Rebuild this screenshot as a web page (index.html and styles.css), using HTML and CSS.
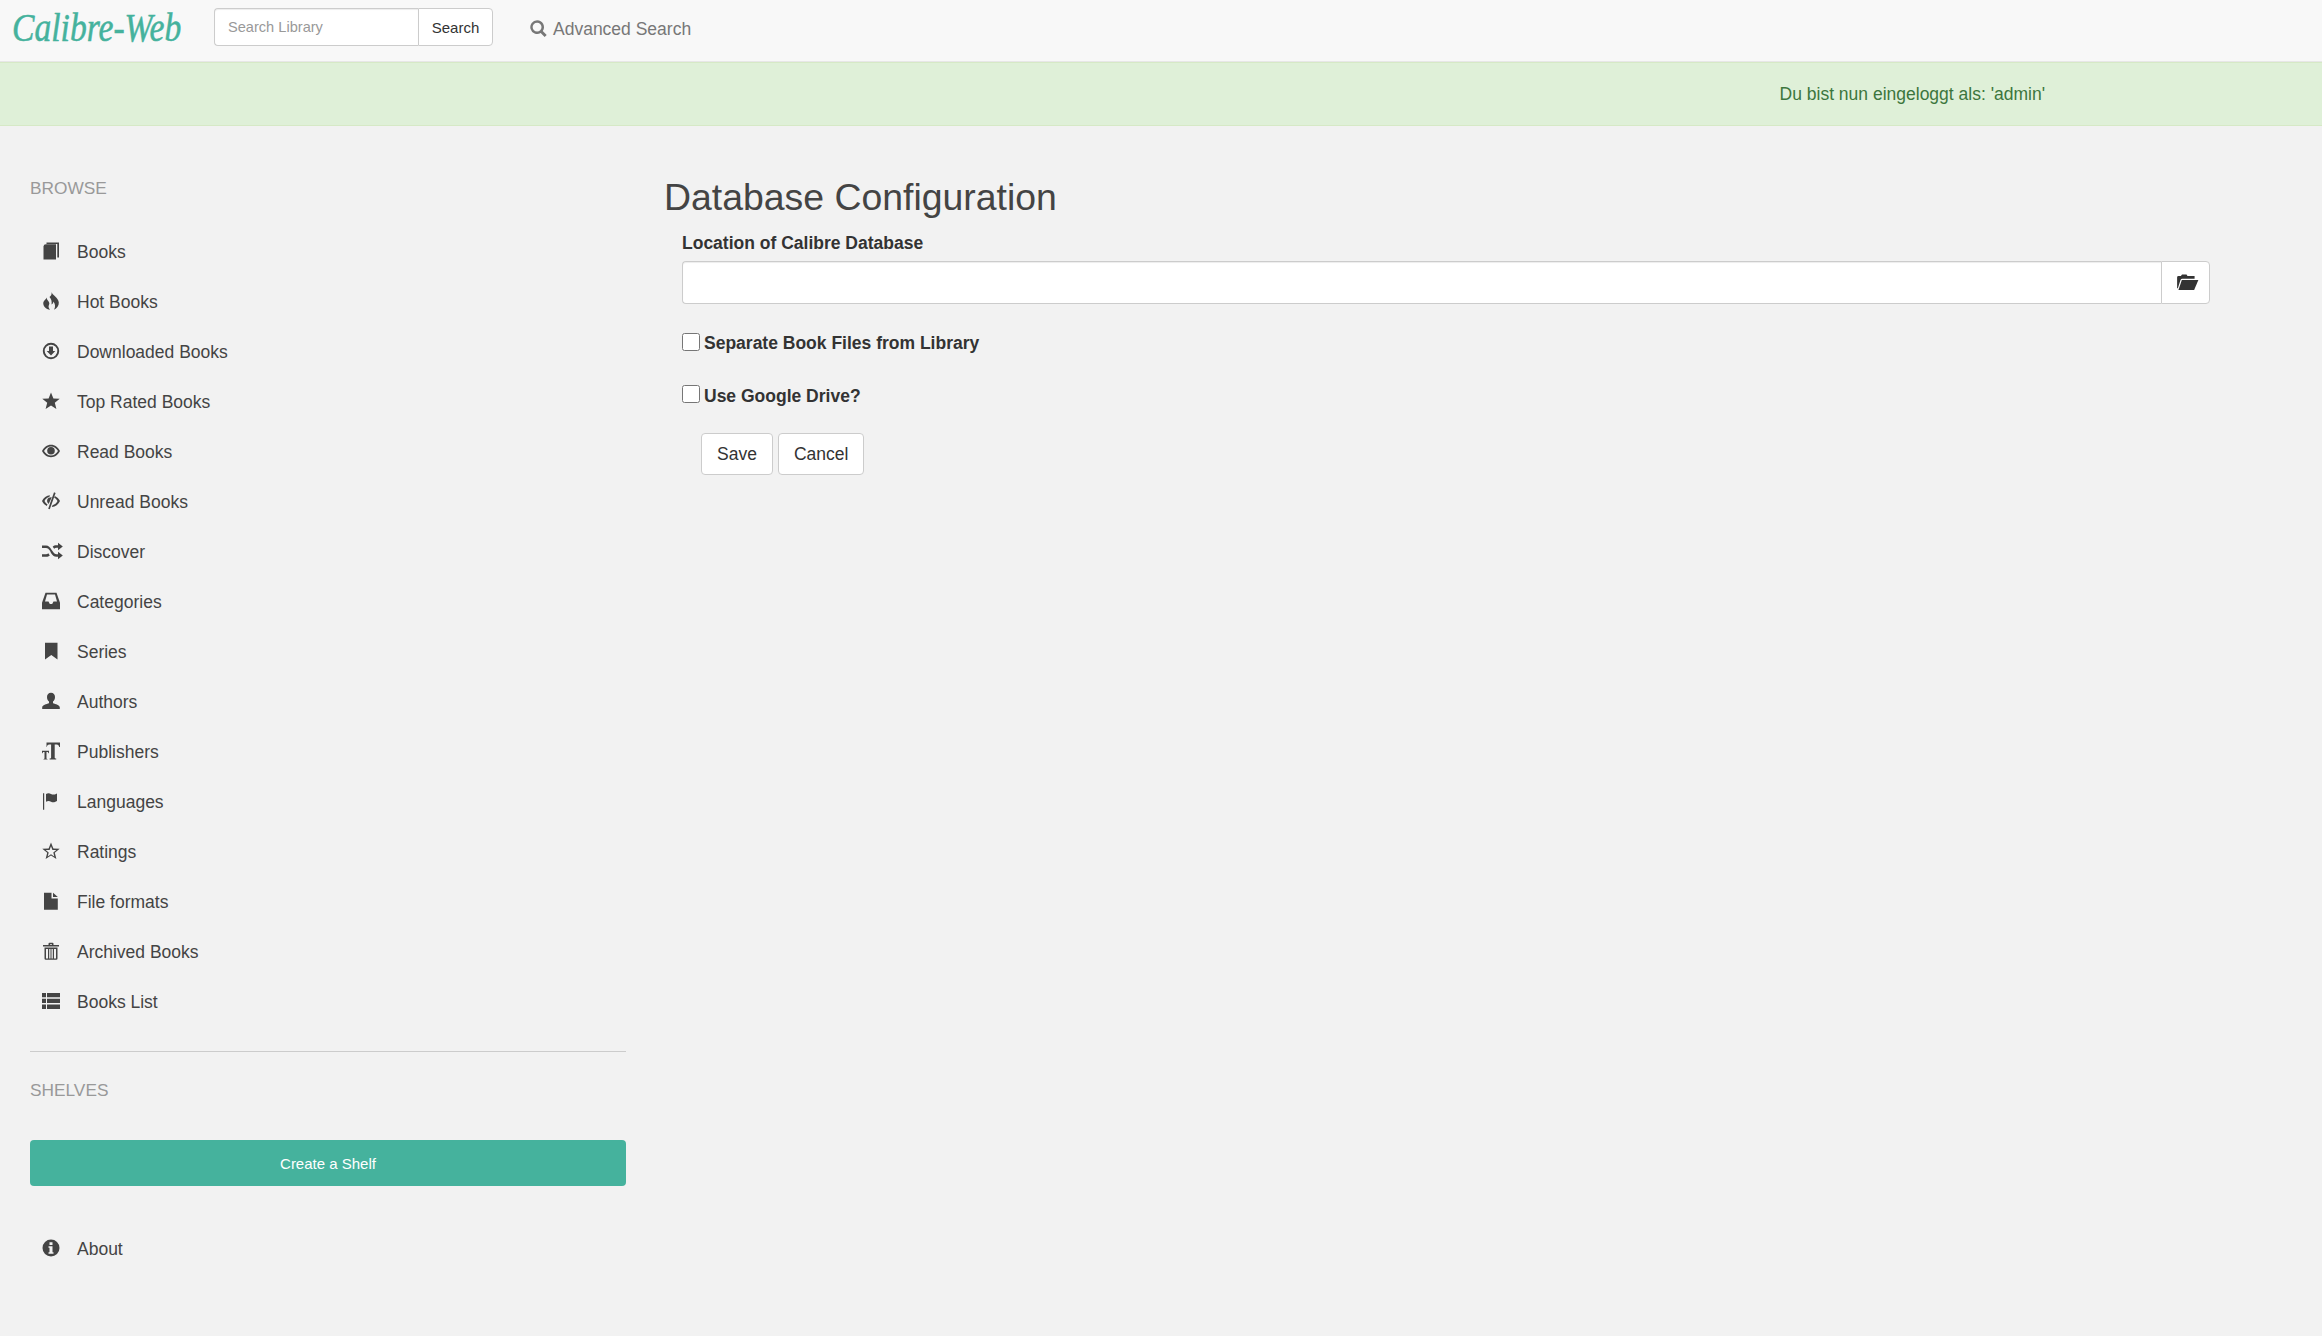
FILE: index.html
```html
<!DOCTYPE html>
<html lang="en">
<head>
    <meta charset="UTF-8">
    <title>Calibre-Web | Database Configuration</title>
    <link rel="stylesheet" href="styles.css">
</head>
<body>
    <nav class="navbar">
        <div class="brand-box"><a class="brand">Calibre-Web</a></div>
        <form class="search-form">
            <input class="search-input" type="text" placeholder="Search Library">
            <button class="search-btn" type="button">Search</button>
        </form>
        <a class="advanced-link">
            <svg class="advanced-icon" viewBox="0 0 18 18"><path fill-rule="evenodd" d="M7.500 .2a7.300 7.300 0 0 1 6 11.400l4.200 4.200-2.200 2.200-4.200-4.200A7.300 7.300 0 1 1 7.500 .2zm0 2.600a4.700 4.700 0 1 0 0 9.400a4.700 4.700 0 0 0 0-9.400z"/></svg>
            Advanced Search
        </a>
    </nav>

    <div class="alert">Du bist nun eingeloggt als: 'admin'</div>

    <div class="main">
        <aside class="sidebar">
            <div class="nav-head">BROWSE</div>
            <ul class="nav-list">
                <li><svg viewBox="0 0 18 18"><path d="M1.500 4.500Q1.500 2.300 4 2.300H14V17.500H1.500z"/><path d="M4.500 .5H17V15.500H15.300V2H4.500z"/></svg>Books</li>
                <li><svg viewBox="0 0 18 18"><path d="M9.500 0C10 3 16.500 5.500 16.800 10.500 17 13.500 15 16.300 12 17.800 13.500 15 13.500 12.500 11.500 9.500 11.300 11 10.500 12 9.500 12.500 10 10 9.500 7 7.500 5 9 4 10 2 9.500 0z"/><path d="M4.500 5.500C4.500 7.500 6.800 9 7.300 11 7.600 12.500 6.300 13.800 6.600 15 6.800 16 7.300 17 8.300 17.800 3.800 17.300 .8 14 1.300 10.500 1.600 8.500 4 7.800 4.500 5.500z"/></svg>Hot Books</li>
                <li><svg viewBox="0 0 18 18"><path fill-rule="evenodd" d="M9 .8a8.200 8.200 0 1 1 0 16.400A8.200 8.200 0 0 1 9 .8zm0 1.900a6.300 6.300 0 1 0 0 12.600A6.300 6.300 0 0 0 9 2.700z"/><path d="M7 4.500h4V9h2.300L9 13.500 4.700 9H7z"/></svg>Downloaded Books</li>
                <li><svg viewBox="0 0 18 18"><path d="M9 .5l2.400 5.900 6.300.4-4.900 4 1.600 6.200L9 13.600l-5.400 3.400 1.600-6.200-4.900-4 6.300-.4z"/></svg>Top Rated Books</li>
                <li><svg viewBox="0 0 18 18"><path fill-rule="evenodd" d="M9 2.800c4 0 7.200 2.700 9 6.200-1.800 3.500-5 6.200-9 6.200S1.800 12.500 0 9c1.800-3.500 5-6.200 9-6.200zM9 4.500c-2.900 0-5.400 1.800-7 4.500 1.600 2.700 4.100 4.500 7 4.500s5.400-1.800 7-4.500c-1.600-2.700-4.100-4.500-7-4.500z"/><circle cx="9" cy="8.800" r="3.800"/></svg>Read Books</li>
                <li><svg viewBox="0 0 18 18"><path d="M8 3.200L7.300 5C5 5.500 3.500 7 2.500 9 3.300 10.500 4.200 11.500 5.500 12.300L4.800 14C2.700 13 1 11 0 9 1.500 5.800 4.500 3.500 8 3.200z"/><path d="M9.800 5.300L6.600 12C5 10.500 4.700 8.500 5.500 7 6.300 5.800 8 5 9.800 5.300z"/><path d="M12 .3L13.600 .9 7.800 17.300 6.200 16.700z"/><path d="M12.800 4C15 5 17 6.800 18 9 16.500 12.500 13.500 14.700 9.800 15L10.500 13.200C12.800 12.700 14.500 11 15.500 9 14.700 7.500 13.500 6.300 12.200 5.700z"/></svg>Unread Books</li>
                <li><svg class="icon-wide" viewBox="0 0 21 18"><path d="M0 3.500h4c2.500 0 4 2 5.500 4.200L11 9.800c1 1.400 1.900 2.400 3.500 2.400H16V9.800l4.800 3.700L16 17.200v-2.500h-1.500c-2.700 0-4-1.700-5.500-3.800L8 8.800C6.800 7.100 5.900 6 4 6H0z"/><path d="M0 12.200h4c1 0 1.700-.3 2.300-.9l1.500 2.100c-.9.800-2.100 1.300-3.800 1.300H0zM16 .8l4.800 3.700L16 8.200V5.800h-1.500c-1 0-1.700.3-2.300 1L10.700 4.700c1-.9 2.100-1.400 3.800-1.400H16z"/></svg>Discover</li>
                <li><svg viewBox="0 0 18 18"><path fill-rule="evenodd" d="M3.500 .8h11l3.500 10v6.500H0V10.800zM5 2.500L3 9.500h3.500l1.300 2.500h2.400l1.300-2.500H15l-2-7z"/></svg>Categories</li>
                <li><svg viewBox="0 0 18 18"><path d="M3 .8h12.500V17.500L9.300 13 3 17.500z"/></svg>Series</li>
                <li><svg viewBox="0 0 18 18"><path d="M9 .8c2.500 0 4 1.900 4 4.300 0 2-.8 3.500-2 4.500v1.600c2.500.9 6.800 1.800 6.800 4.200v1.700H.2v-1.700c0-2.400 4.300-3.300 6.800-4.200V9.600C5.800 8.600 5 7.100 5 5.100 5 2.700 6.500.8 9 .8z"/></svg>Authors</li>
                <li><svg viewBox="0 0 18 18"><path d="M4.500 .5H18V5h-.8c-.2-1.500-1-2.600-2.500-2.600h-2V15.500c0 .7.500 1 1.500 1v1H7.600v-1c1 0 1.500-.3 1.500-1V2.400h-1.800C5.800 2.400 5 3.500 4.800 5h-.3z"/><path d="M0 8.800h7v2.500h-.5c-.1-.7-.5-1.300-1.200-1.300H4.500v6.200c0 .6.300.8 1 .8v.5H1.500V17c.7 0 1-.2 1-.8V10h-.8C1 10 .6 10.600.5 11.300H0z"/></svg>Publishers</li>
                <li><svg viewBox="0 0 18 18"><path d="M1 1.200h1.200v16.600H1z"/><path d="M4 2c2-1.200 3.600-.8 5 0 1.700.9 3.300.9 6-.6v7.700c-2.700 1.500-4.300 1.500-6 .6-1.400-.8-3-1.200-5 0z"/></svg>Languages</li>
                <li><svg viewBox="0 0 18 18"><path fill-rule="evenodd" d="M9 .5l2.400 5.900 6.300.4-4.900 4 1.600 6.200L9 13.600l-5.400 3.400 1.600-6.200-4.900-4 6.300-.4zm0 3.700L7.600 7.900l-3.900.2 3 2.500-1 3.800L9 12.300l3.300 2.100-1-3.800 3-2.500-3.900-.2z"/></svg>Ratings</li>
                <li><svg viewBox="0 0 18 18"><path d="M2 .8h7.500V6.500H15.800V17.800H2z"/><path d="M11 .8l4.800 4.300H11z"/></svg>File formats</li>
                <li><svg viewBox="0 0 18 18"><path fill-rule="evenodd" d="M6.500 3V1.800Q6.500.8 7.500.8h3q1 0 1 1V3H17v1.500H1V3zM8 3h2V2.200H8zM2.500 5.500h13V16.500q0 1.300-1.300 1.300H3.800q-1.300 0-1.300-1.300zM4 7v9.300q0 .2.200.2H6V7zm3.200 0v9.500H8.500V7zm2.300 0v9.500h1.300V7zm2.500 0v9.500h1.800q.2 0 .2-.2V7z"/></svg>Archived Books</li>
                <li><svg viewBox="0 0 18 18"><path d="M0 1h4v4.300H0zM5 1h13v4.300H5zM0 6.800h4v4.300H0zM5 6.800h13v4.300H5zM0 12.600h4v4.400H0zM5 12.600h13v4.400H5z"/></svg>Books List</li>
            </ul>
            <hr class="divider">
            <div class="nav-head nav-head-shelves">SHELVES</div>
            <a class="create-shelf">Create a Shelf</a>
            <div class="about-row"><svg viewBox="0 0 18 18"><path fill-rule="evenodd" d="M9 .5a8.500 8.500 0 1 1 0 17A8.500 8.500 0 0 1 9 .5zM7.500 3.300v2.600h3V3.300zM6.500 7.300v1.400h1v4.500h-1v1.500h5v-1.500h-1V7.300z"/></svg>About</div>
        </aside>

        <section class="content">
            <h2 class="page-title">Database Configuration</h2>
            <div class="config-form">
                <label class="field-label" for="db-path">Location of Calibre Database</label>
                <div class="input-group">
                    <input class="path-input" id="db-path" type="text">
                    <button class="folder-btn" type="button">
                        <svg viewBox="0 0 24 18"><path d="M1 15V3.500Q1 2 2.500 2H5L6.200 .5H11L12 2h7.500V5H6.500Q5 5 4.500 6.500L1.800 15z"/><path d="M6 6.300h17.500L19 17H2.400z"/></svg>
                    </button>
                </div>
                <label class="check-row check-first"><input type="checkbox">Separate Book Files from Library</label>
                <label class="check-row check-second"><input type="checkbox">Use Google Drive?</label>
                <div class="actions">
                    <button class="btn" type="button">Save</button>
                    <button class="btn" type="button">Cancel</button>
                </div>
            </div>
        </section>
    </div>
</body>
</html>
```

FILE: styles.css
```css
* {
    box-sizing: border-box;
}
body {
    margin: 0;
    background: #f2f2f2;
    color: #444;
    font-family: "Liberation Sans", Arial, sans-serif;
    font-size: 17.5px;
}
.navbar {
    display: flex;
    align-items: flex-start;
    height: 62px;
    padding: 8px 0 0 12px;
    background: #f8f8f8;
    border-bottom: 1px solid #e7e7e7;
}
.brand-box {
    width: 202px;
    margin-top: -3px;
}
.brand {
    display: inline-block;
    color: #45b29d;
    font-family: "Liberation Serif", serif;
    font-style: italic;
    font-size: 40px;
    line-height: 46px;
    white-space: nowrap;
    -webkit-text-stroke: 0.5px #45b29d;
    transform: scaleX(0.84);
    transform-origin: left center;
}
.search-form {
    display: flex;
    width: 279px;
    height: 38px;
}
.search-input {
    flex: 1;
    min-width: 0;
    padding: 0 13px;
    border: 1px solid #ccc;
    border-right: none;
    border-radius: 4px 0 0 4px;
    background: #fff;
    box-shadow: inset 0 1px 1px rgba(0, 0, 0, 0.075);
    font-family: inherit;
    font-size: 14.6px;
}
.search-input::placeholder {
    color: #999;
}
.search-btn {
    width: 75px;
    padding: 0;
    border: 1px solid #ccc;
    border-radius: 0 4px 4px 0;
    background: #fff;
    color: #333;
    font-family: inherit;
    font-size: 15px;
}
.advanced-link {
    display: flex;
    align-items: center;
    gap: 6px;
    height: 43px;
    margin-left: 37px;
    color: #777;
}
.advanced-icon {
    width: 17px;
    height: 17px;
    margin-top: -2px;
    fill: #777;
}
.alert {
    display: flex;
    align-items: center;
    justify-content: flex-end;
    height: 64px;
    padding-right: 277px;
    background: #dff0d8;
    border-top: 1px solid #d6e9c6;
    border-bottom: 1px solid #d6e9c6;
    color: #3c763d;
}
.main {
    display: flex;
}
.sidebar {
    flex: none;
    width: 664px;
    padding: 50px 38px 0 30px;
}
.nav-head {
    color: #999;
    font-size: 17.3px;
    line-height: 24px;
}
.nav-list {
    margin: 27px 0 0;
    padding: 0;
    list-style: none;
}
.nav-list li,
.about-row {
    display: flex;
    align-items: center;
    height: 50px;
    padding-left: 12px;
}
.nav-list svg,
.about-row svg {
    flex: none;
    width: 18px;
    height: 18px;
    margin: -3px 17px 0 0;
    fill: #444;
}
.nav-list svg.icon-wide {
    width: 21px;
    margin-right: 14px;
}
.divider {
    height: 1px;
    margin: 24px 0 0;
    border: none;
    background: #ccc;
}
.nav-head-shelves {
    margin-top: 26px;
}
.create-shelf {
    display: flex;
    align-items: center;
    justify-content: center;
    height: 46px;
    margin-top: 38px;
    border-radius: 4px;
    background: #45b29d;
    color: #fff;
    font-size: 15px;
}
.about-row {
    margin-top: 38px;
}
.content {
    flex: 1;
    padding-top: 50px;
}
.page-title {
    margin: 0;
    color: #444;
    font-size: 37.4px;
    font-weight: 400;
    line-height: 42px;
}
.config-form {
    width: 1528px;
    margin: 13px 0 0 18px;
}
.field-label {
    display: block;
    color: #333;
    font-weight: 700;
    line-height: 24px;
}
.input-group {
    display: flex;
    height: 43px;
    margin-top: 6px;
}
.path-input {
    flex: 1;
    border: 1px solid #ccc;
    border-right: none;
    border-radius: 4px 0 0 4px;
    background: #fff;
    box-shadow: inset 0 1px 1px rgba(0, 0, 0, 0.075);
}
.folder-btn {
    display: flex;
    align-items: center;
    justify-content: center;
    width: 49px;
    padding: 0 0 0 4px;
    border: 1px solid #ccc;
    border-radius: 0 4px 4px 0;
    background: #fff;
}
.folder-btn svg {
    width: 23px;
    height: 17px;
    fill: #333;
}
.check-row {
    display: flex;
    align-items: flex-start;
    gap: 4px;
    color: #333;
    font-weight: 700;
    line-height: 24px;
}
.check-row input {
    width: 18px;
    height: 18px;
    margin: 2px 0 0;
}
.check-first {
    margin-top: 27px;
}
.check-second {
    margin-top: 29px;
}
.check-second input {
    margin-top: 1px;
}
.actions {
    display: flex;
    gap: 5px;
    margin: 25px 0 0 19px;
}
.btn {
    height: 42px;
    padding: 0 15px;
    border: 1px solid #ccc;
    border-radius: 4px;
    background: #fff;
    color: #333;
    font-family: inherit;
    font-size: 17.5px;
}
```
